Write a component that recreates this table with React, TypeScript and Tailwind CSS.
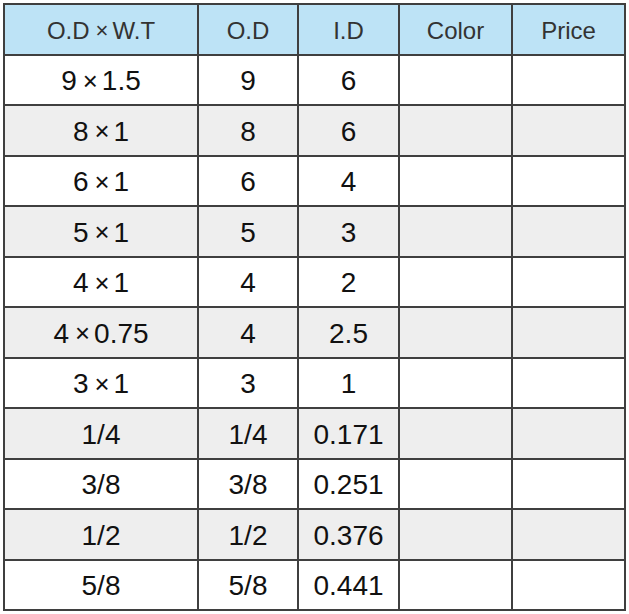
import React from 'react';

const headers = ['O.D × W.T', 'O.D', 'I.D', 'Color', 'Price'];

const rows: [string, string, string][] = [
    ['9 × 1.5', '9', '6'],
    ['8 × 1', '8', '6'],
    ['6 × 1', '6', '4'],
    ['5 × 1', '5', '3'],
    ['4 × 1', '4', '2'],
    ['4 × 0.75', '4', '2.5'],
    ['3 × 1', '3', '1'],
    ['1/4', '1/4', '0.171'],
    ['3/8', '3/8', '0.251'],
    ['1/2', '1/2', '0.376'],
    ['5/8', '5/8', '0.441'],
];

// split the "×" out so its spacing can be tightened a little
const Cell: React.FC<{ text: string }> = ({ text }) => {
    const parts = text.split(' × ');
    if (parts.length < 2) return <>{text}</>;
    return (
        <>
            {parts[0]}
            <span className="ml-[6px] mr-[4px] text-[0.92em]">×</span>
            {parts[1]}
        </>
    );
};

export default function App() {
    return (
        <div className="w-[629px] h-[614px] bg-white pt-[3px] pl-[3px]" style={{ fontFamily: '"Liberation Sans", Arial, sans-serif' }}>
            <div className="inline-grid grid-cols-[192px_98px_99px_111px_111px] auto-rows-[48.5px] gap-[2px] p-[2px] bg-[#3f3f3f]">
                {headers.map(h => (
                    <div key={h} className="bg-[#bde3f6] flex items-center justify-center pt-[3px] text-[24px] text-[#333]">
                        <Cell text={h} />
                    </div>
                ))}
                {rows.map((r, i) => {
                    const bg = i % 2 === 1 ? 'bg-[#eeeeee]' : 'bg-white';
                    return (
                        <React.Fragment key={i}>
                            {[...r, '', ''].map((v, j) => (
                                <div key={j} className={`${bg} flex items-center justify-center pt-[3px] text-[28px] text-[#111]`}>
                                    <Cell text={v} />
                                </div>
                            ))}
                        </React.Fragment>
                    );
                })}
            </div>
        </div>
    );
}
